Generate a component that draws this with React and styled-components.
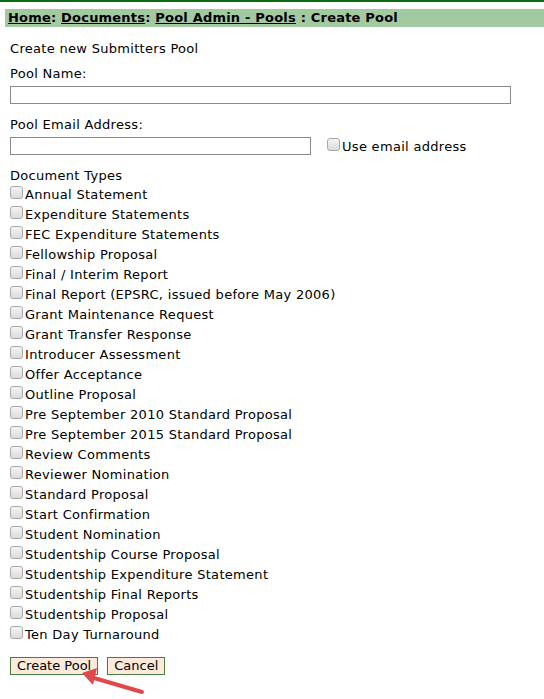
import React from 'react'
import styled, { createGlobalStyle } from 'styled-components'

const GlobalStyle = createGlobalStyle`
  body {
    margin: 0;
    background: #fff;
    font-family: "DejaVu Sans", Verdana, sans-serif;
    font-size: 13px;
    letter-spacing: 0.3px;
    color: #000;
  }
`

const Page = styled.div`
  position: relative;
  width: 544px;
  height: 699px;
  border-top: 2px solid #0b6b12;
  box-sizing: border-box;
  overflow: hidden;
`

const Crumbs = styled.div`
  margin: 7px 0 0 5px;
  height: 18px;
  line-height: 17px;
  padding-left: 3px;
  background: #a3c9a1;
  font-weight: bold;
  font-size: 13px;
  letter-spacing: 0.2px;
  white-space: nowrap;
`

const Crumb = styled.a`
  color: #000;
  text-decoration: underline;
`

const Form = styled.form`
  padding: 0 10px;
`

const Line = styled.div`
  margin-top: ${p => p.$top || 0}px;
  height: 16px;
  line-height: 16px;
`

const TextInput = styled.input`
  display: block;
  box-sizing: border-box;
  width: ${p => p.$width}px;
  height: 18px;
  margin: ${p => (p.$flush ? 0 : 4)}px 0 0;
  border: 1px solid #8a8a8a;
  padding: 0 2px;
  font: inherit;
`

const EmailRow = styled.div`
  display: flex;
  align-items: center;
  margin-top: 3px;
`

const CheckLabel = styled.label`
  display: flex;
  align-items: center;
  height: 20px;
  margin-left: ${p => p.$indent || 0}px;
  white-space: nowrap;
`

const Box = styled.input`
  appearance: none;
  width: 13px;
  height: 13px;
  margin: 0 2px 0 0;
  border: 1px solid #a9a9a9;
  border-radius: 3px;
  background: linear-gradient(#f4f4f4, #dcdcdc);
  box-sizing: border-box;
  position: relative;
  top: -2px;
`

const List = styled.div`
  margin-top: 0;
`

const Buttons = styled.div`
  display: flex;
  gap: 9px;
  margin-top: 13px;
`

const Button = styled.button`
  height: 18px;
  padding: 0 6px;
  background: #fdeada;
  border: 1px solid #4a7c3f;
  font: inherit;
  color: #000;
  line-height: 14px;
`

const Arrow = styled.svg`
  position: absolute;
  left: 78px;
  top: 662px;
`

const docTypes = [
  'Annual Statement',
  'Expenditure Statements',
  'FEC Expenditure Statements',
  'Fellowship Proposal',
  'Final / Interim Report',
  'Final Report (EPSRC, issued before May 2006)',
  'Grant Maintenance Request',
  'Grant Transfer Response',
  'Introducer Assessment',
  'Offer Acceptance',
  'Outline Proposal',
  'Pre September 2010 Standard Proposal',
  'Pre September 2015 Standard Proposal',
  'Review Comments',
  'Reviewer Nomination',
  'Standard Proposal',
  'Start Confirmation',
  'Student Nomination',
  'Studentship Course Proposal',
  'Studentship Expenditure Statement',
  'Studentship Final Reports',
  'Studentship Proposal',
  'Ten Day Turnaround',
]

export default function App() {
  return (
    <Page>
      <GlobalStyle />
      <Crumbs>
        <Crumb>Home</Crumb>: <Crumb>Documents</Crumb>: <Crumb>Pool Admin - Pools</Crumb> : Create Pool
      </Crumbs>
      <Form>
        <Line $top={14}>Create new Submitters Pool</Line>
        <Line $top={9}>Pool Name:</Line>
        <TextInput $width={501} />
        <Line $top={13}>Pool Email Address:</Line>
        <EmailRow>
          <TextInput $width={301} $flush />
          <CheckLabel $indent={16}>
            <Box type="checkbox" />
            Use email address
          </CheckLabel>
        </EmailRow>
        <Line $top={12}>Document Types</Line>
        <List>
          {docTypes.map(t => (
            <CheckLabel key={t}>
              <Box type="checkbox" />
              {t}
            </CheckLabel>
          ))}
        </List>
        <Buttons>
          <Button type="button">Create Pool</Button>
          <Button type="button">Cancel</Button>
        </Buttons>
      </Form>
      <Arrow width="70" height="32" viewBox="0 0 70 32">
        <path d="M64 28 L16 14" stroke="#e2474b" strokeWidth="4" strokeLinecap="round" fill="none" />
        <path d="M4 9 L19 4 L15 21 Z" fill="#e2474b" />
      </Arrow>
    </Page>
  )
}
